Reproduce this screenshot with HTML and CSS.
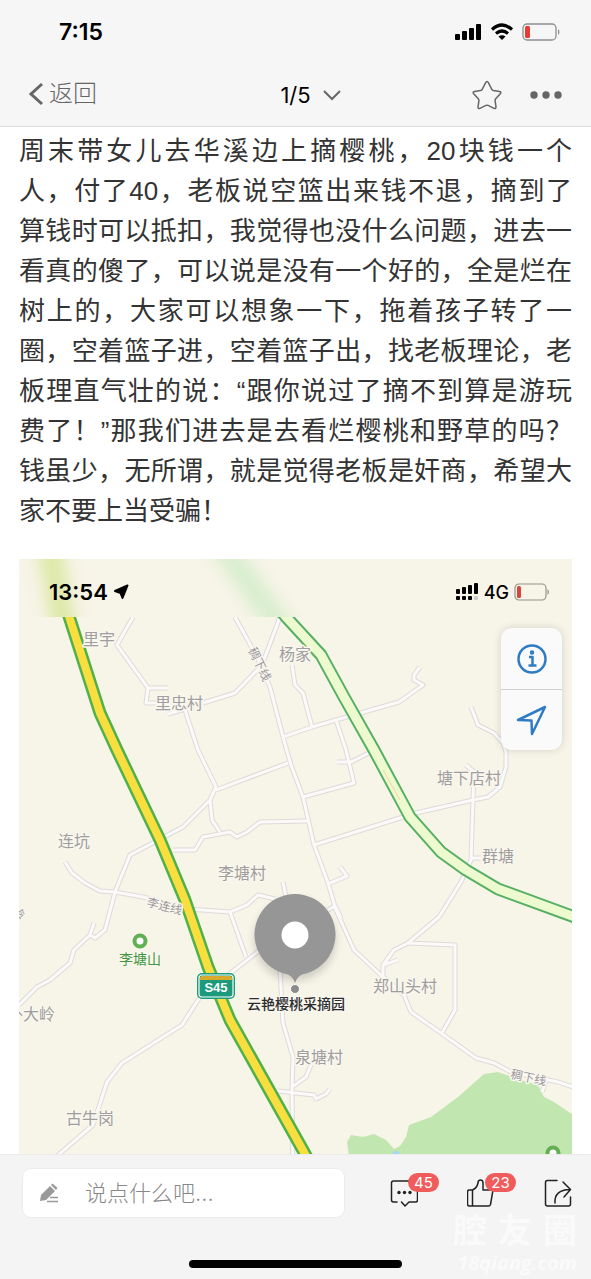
FILE: index.html
```html
<!DOCTYPE html>
<html lang="zh-CN">
<head>
    <meta charset="UTF-8">
    <meta name="viewport" content="width=device-width, initial-scale=1.0">
    <title>1/5</title>
    <link rel="stylesheet" href="styles.css">
</head>
<body>
    <header class="top">
        <div class="status">
            <span class="clock">7:15</span>
            <svg class="status-icons" width="108" height="20" viewBox="0 0 108 20" aria-hidden="true">
                <rect x="1" y="12" width="5" height="6" rx="1"/>
                <rect x="8" y="9" width="5" height="9" rx="1"/>
                <rect x="15" y="6" width="5" height="12" rx="1"/>
                <rect x="22" y="2" width="5" height="16" rx="1"/>
                <path d="M38 7.500q10-9 20 0M42 11.500q6-5 12 0" fill="none" stroke="#000" stroke-width="3.200"/>
                <path d="M44.500 14.500q3.500-2.500 7 0L48 18z"/>
                <rect x="69" y="2" width="33" height="16" rx="4" fill="none" stroke="#8f8f8f" stroke-width="1.300"/>
                <rect x="71" y="4" width="5" height="12" rx="1.500" fill="#ea3a35"/>
                <path d="M104 7q3 3 0 6z" fill="#8f8f8f"/>
            </svg>
        </div>
        <nav class="nav">
            <a class="back" href="#">
                <svg width="16" height="24" viewBox="0 0 16 24" aria-hidden="true"><path d="M14 2L3 12l11 10"/></svg>
                返回
            </a>
            <button class="pager" type="button">
                1/5
                <svg width="18" height="12" viewBox="0 0 18 12" aria-hidden="true"><path d="M1 2l8 8 8-8"/></svg>
            </button>
            <div class="nav-right">
                <button type="button" aria-label="收藏">
                    <svg width="30" height="30" viewBox="0 0 30 30" aria-hidden="true"><path d="M13.500 2.800q1.500-2.600 3 0l3.300 6.500q.5 1 1.600 1.100l6.100 1q2.300.5.800 2.400l-4.600 5q-.8.900-.6 2l.9 6q.1 2.300-2 1.500l-5.900-2.900q-1.100-.5-2.200 0L8 28.300q-2.100.8-2-1.500l.9-6q.2-1.100-.6-2l-4.600-5q-1.500-1.900.8-2.400l6.100-1q1.100-.1 1.600-1.100z"/></svg>
                </button>
                <button type="button" aria-label="更多">
                    <svg class="dots" width="32" height="10" viewBox="0 0 32 10" aria-hidden="true"><circle cx="4" cy="5" r="3.700"/><circle cx="16" cy="5" r="3.700"/><circle cx="28" cy="5" r="3.700"/></svg>
                </button>
            </div>
        </nav>
    </header>

    <main class="post">
        <p class="text">
            <span>周末带女儿去华溪边上摘樱桃，20块钱一个</span>
            <span>人，付了40，老板说空篮出来钱不退，摘到了</span>
            <span>算钱时可以抵扣，我觉得也没什么问题，进去一</span>
            <span>看真的傻了，可以说是没有一个好的，全是烂在</span>
            <span>树上的，大家可以想象一下，拖着孩子转了一</span>
            <span>圈，空着篮子进，空着篮子出，找老板理论，老</span>
            <span>板理直气壮的说：“跟你说过了摘不到算是游玩</span>
            <span>费了！”那我们进去是去看烂樱桃和野草的吗？</span>
            <span>钱虽少，无所谓，就是觉得老板是奸商，希望大</span>
            <span>家不要上当受骗！</span>
        </p>

        <div class="map">
            <svg class="map-canvas" viewBox="19 559 553 622" role="img" aria-label="地图">
                <defs>
                    <filter id="soft" x="-50%" y="-50%" width="200%" height="200%"><feGaussianBlur stdDeviation="8"/></filter>
                    <filter id="shadow" x="-30%" y="-30%" width="160%" height="160%"><feGaussianBlur stdDeviation="5"/></filter>
                    <clipPath id="band"><rect x="19" y="559" width="553" height="58"/></clipPath>
                    <clipPath id="below"><rect x="19" y="617" width="553" height="564"/></clipPath>
                    <g id="lanes">
                        <path d="M133 617L117 645L148 688H168M148 688L146 703H156"/>
                        <path d="M235 617L257 657L270 687L283 737L291 765L303 797L314 845L328 883L336 910L354 950L383 977L404 995L411 1012L441 1033L476 1058L494 1063L511 1072L558 1082L573 1087"/>
                        <path d="M280 617L262 665L235 693L203 703M168 714L185 709"/>
                        <path d="M292 665L295 685L303 693L312 727"/>
                        <path d="M283 737L312 727L336 720L399 702L423 685L414 680V675L420 667"/>
                        <path d="M336 720L346 750L354 783L303 797M337 762H351L369 753"/>
                        <path d="M471 707L478 725L494 733L503 743L506 752V767L500 787L488 797L473 800L416 813L314 845"/>
                        <path d="M466 765L474 772L473 800L471 860L461 882L439 917L408 943L394 950L383 965V977M471 858H481M383 965L398 960"/>
                        <path d="M408 943L455 945V1010L442 1033"/>
                        <path d="M340 867L347 876L328 884M328 910L335 906L341 918"/>
                        <path d="M307 821L260 822L247 832L237 837L230 832L203 837L195 850H173"/>
                        <path d="M185 710L198 750L216 787L210 800L183 827L130 855L115 892L105 930L95 938L90 935L74 950L70 963L50 980L37 987L19 1005M94 923L90 935"/>
                        <path d="M216 790L288 763M210 800L212 820L220 832"/>
                        <path d="M65 862L72 873L85 883L100 891L115 892L143 897L187 909L230 912L247 905L258 895L275 899M283 882L286 897"/>
                        <path d="M230 912L246 957M260 950L200 997L182 1025L122 1063L107 1082L93 1125L57 1156"/>
                        <path d="M280 970L283 1023L293 1057L292 1090L293 1180M278 1091L314 1095L316 1099L326 1094L330 1089M292 1087L306 1077L311 1065"/>
                        <path d="M546 1081L542 1092"/>
                    </g>
                </defs>

                <rect class="land" x="19" y="559" width="553" height="622"/>
                <path class="park" d="M349 1181V1156L347 1142L351 1135L363 1137L374 1134L386 1140L394 1149L400 1146L406 1137L409 1125L431 1117L458 1097L484 1074L498 1072L521 1080L538 1085L544 1097L554 1102L573 1115V1181z"/>
                <circle cx="396" cy="1155" r="4" fill="#a9d9ee"/>

                <g clip-path="url(#below)">
                    <use href="#lanes" class="lane-edge"/>
                    <use href="#lanes" class="lane"/>
                    <path class="road-edge express" d="M280 610L287 618L321 655L344 697L374 750L410 817L441 852L466 870L498 889L580 919"/>
                    <path class="road pale" d="M280 610L287 618L321 655L344 697L374 750L410 817L441 852L466 870L498 889L580 919"/>
                    <path d="M383 770L400 800" stroke="#f6dfae" stroke-width="1.500"/>
                    <path class="road-edge" d="M67 610L100 713L117 750L160 840L185 900L208 967L230 1020L300 1145L320 1181"/>
                    <path class="road" d="M67 610L100 713L117 750L160 840L185 900L208 967L230 1020L300 1145L320 1181"/>
                </g>
                <g clip-path="url(#band)">
                    <g filter="url(#soft)" fill="none" stroke-width="24">
                        <path d="M46 530L66 640" stroke="#dde8a6"/>
                        <path d="M218 540L290 640" stroke="#d8eecd"/>
                    </g>
                </g>

                <g class="place">
                    <text x="83" y="645">里宇</text>
                    <text x="155" y="709">里忠村</text>
                    <text x="279" y="660">杨家</text>
                    <text x="437" y="784">塘下店村</text>
                    <text x="58" y="847">连坑</text>
                    <text x="218" y="879">李塘村</text>
                    <text x="482" y="862">群塘</text>
                    <text x="373" y="992">郑山头村</text>
                    <text x="295" y="1063">泉塘村</text>
                    <text x="66" y="1124">古牛岗</text>
                    <text x="7" y="1020">外大岭</text>
                </g>
                <g class="street">
                    <text transform="translate(248 650) rotate(64)">稠下线</text>
                    <text transform="translate(146 906) rotate(14)">李连线</text>
                    <text transform="translate(510 1078) rotate(12)">稠下线</text>
                    <text transform="translate(12 916) rotate(18)">岭</text>
                </g>

                <circle class="peak" cx="140" cy="941" r="5.500"/>
                <circle class="peak" cx="553" cy="1153" r="5.500"/>
                <text class="peak-name" x="140" y="964">李塘山</text>

                <rect x="197" y="973" width="38" height="26" rx="5" fill="#1b9a7c"/>
                <rect x="199" y="975" width="34" height="22" rx="3" fill="#1b9a7c" stroke="#fff" stroke-width="1.200"/>
                <path d="M200 980v-2q0-2 2-2h28q2 0 2 2v2z" fill="#d9a92c"/>
                <text class="shield" x="216" y="992">S45</text>

                <circle cx="295" cy="940" r="40" fill="#000" opacity=".18" filter="url(#shadow)"/>
                <path d="M295 983q-3-9-11-9.500A40.500 40.500 0 1 1 306 973.500q-8 .5-11 9.500z" fill="#969696"/>
                <circle cx="295" cy="935" r="13.500" fill="#fff"/>
                <circle cx="295" cy="989" r="4.500" fill="#8b8b8b" stroke="#fff"/>
                <text class="pin-name" x="296" y="1009">云艳樱桃采摘园</text>
            </svg>

            <div class="map-status">
                <span class="clock">13:54</span>
                <svg width="16" height="16" viewBox="0 0 16 16" aria-hidden="true"><path d="M14.500 1.500L9.500 14 7.500 9 2 7z" stroke="#000" stroke-width="2" stroke-linejoin="round"/></svg>
                <svg class="push" width="24" height="20" viewBox="0 0 24 20" aria-hidden="true">
                    <rect x="1" y="7" width="4" height="5" rx="1"/><rect x="7" y="5" width="4" height="7" rx="1"/><rect x="13" y="3" width="4" height="9" rx="1"/><rect x="19" y="1" width="4" height="11" rx="1"/>
                    <rect x="1" y="14" width="4" height="4" rx="1"/><rect x="7" y="14" width="4" height="4" rx="1"/><rect x="13" y="14" width="4" height="4" rx="1"/><rect x="19" y="14" width="4" height="4" rx="1" fill="#ccc"/>
                </svg>
                <span class="carrier">4G</span>
                <svg width="36" height="18" viewBox="0 0 36 18" aria-hidden="true">
                    <rect x="1" y="1" width="31" height="16" rx="4" fill="none" stroke="#96948c" stroke-width="1.200"/>
                    <rect x="3" y="3" width="4" height="12" rx="1.500" fill="#d9453f"/>
                    <path d="M33.500 6q3 3 0 6z" fill="#96948c"/>
                </svg>
            </div>

            <div class="map-tools">
                <button type="button" aria-label="信息">
                    <svg width="32" height="32" viewBox="0 0 32 32" aria-hidden="true"><circle cx="16" cy="16" r="13.500"/><path d="M13 14h3.500v8.500M12.500 22.500h8"/><circle cx="16" cy="9.500" r="1"/></svg>
                </button>
                <button type="button" aria-label="定位">
                    <svg width="32" height="32" viewBox="0 0 32 32" aria-hidden="true"><path d="M29 3L16 30l-.5-13.500L2 16z"/></svg>
                </button>
            </div>
        </div>
    </main>

    <footer class="bottom">
        <div class="bar">
            <label class="comment-box">
                <svg width="20" height="20" viewBox="0 0 20 20" aria-hidden="true"><path d="M1 18l1-6L11 3l5 5-9 9zM12 2l1.500-1.500 5 4.500L17 7z"/><path d="M11 14.500h8M8 18.500h11" stroke="#999" stroke-width="1.500"/></svg>
                <input type="text" placeholder="说点什么吧..." aria-label="说点什么吧">
            </label>
            <div class="actions">
                <button type="button" aria-label="评论">
                    <svg width="28" height="28" viewBox="0 0 28 28" aria-hidden="true"><path d="M7 23H3.500q-2 0-2-2V4q0-2 2-2h22q2 0 2 2v17q0 2-2 2H19l-4 4-3.500-4"/><g fill="#222" stroke="none"><circle cx="9" cy="13.500" r="1.700"/><circle cx="14.500" cy="13.500" r="1.700"/><circle cx="20" cy="13.500" r="1.700"/></g></svg>
                    <span class="badge">45</span>
                </button>
                <button type="button" aria-label="点赞">
                    <svg width="28" height="28" viewBox="0 0 28 28" aria-hidden="true"><path d="M5.500 11H2.500q-2 0-2 2v12q0 2 2 2h19q1.500 0 2-1.500L26 11H16V4q0-3-2.500-3T11 4q-1 5-5.500 7v16"/></svg>
                    <span class="badge">23</span>
                </button>
                <button type="button" aria-label="分享">
                    <svg width="28" height="28" viewBox="0 0 28 28" aria-hidden="true"><path d="M13 1.500H3.500q-2 0-2 2v21.500q0 2 2 2h21q2 0 2-2V18M11 24q-1-13 15-13.500M19 3l7.500 7.500L20 18"/></svg>
                </button>
            </div>
        </div>
        <div class="watermark"><span class="mark-name">腔友圈</span><span class="mark-site">18qiang.com</span></div>
        <div class="home-line"></div>
    </footer>
</body>
</html>
```
FILE: styles.css
```css
* {
    box-sizing: border-box;
}

body {
    margin: 0;
    height: 100vh;
    display: flex;
    flex-direction: column;
    overflow: hidden;
    background-color: #fff;
    font-family: Inter, "Noto Sans CJK SC", sans-serif;
    color: #333;
}

button {
    display: flex;
    align-items: center;
    padding: 0;
    border: none;
    background: none;
    font: inherit;
    cursor: pointer;
}

svg {
    display: block;
    flex: none;
}

/* top bar */
.top {
    flex: none;
    background-color: #f6f6f6;
    border-bottom: 1px solid #dcdcdc;
}

.status {
    display: flex;
    justify-content: space-between;
    align-items: center;
    height: 64px;
    padding: 0 29px 0 59px;
}

.clock {
    font-size: 22px;
    font-weight: 600;
    color: #000;
}

.status .clock {
    font-size: 23px;
}

.nav {
    display: grid;
    grid-template-columns: 1fr auto 1fr;
    align-items: center;
    height: 62px;
    padding: 0 29px 0 28px;
}

.nav svg {
    fill: none;
    stroke: #666;
    stroke-width: 2;
}

.back {
    display: flex;
    align-items: center;
    gap: 5px;
    font-size: 24px;
    font-weight: 300;
    line-height: 32px;
    padding-bottom: 2px;
    color: #666;
    text-decoration: none;
}

.nav .back svg {
    stroke-width: 3;
}

.pager {
    gap: 12px;
    padding-left: 31px;
    font-size: 22px;
    color: #000;
}

.nav-right {
    display: flex;
    justify-content: flex-end;
    gap: 28px;
}

.nav-right svg {
    stroke-width: 1.5;
}

.nav .dots {
    fill: #666;
    stroke: none;
}

/* post */
.post {
    flex: 1;
    min-height: 0;
    overflow: hidden;
    padding: 4px 19px 0;
}

.text {
    margin: 0 0 28px;
    font-family: "Liberation Sans", "Noto Sans CJK SC", sans-serif;
    font-size: 26px;
    line-height: 40px;
}

.text span {
    display: block;
    white-space: nowrap;
    text-align: justify;
    text-align-last: justify;
}

.text span:last-child {
    text-align-last: left;
}

/* map */
.map {
    position: relative;
}

.map-canvas {
    width: 100%;
}

.land {
    fill: #f7f4e8;
}

.park {
    fill: #c2e6b0;
}

.lane-edge,
.lane,
.road-edge,
.road {
    fill: none;
    stroke-linejoin: round;
}

.lane-edge {
    stroke: #dedadb;
    stroke-width: 5;
}

.lane {
    stroke: #fbfaf8;
    stroke-width: 3;
}

.road-edge {
    stroke: #4fb149;
    stroke-width: 13;
}

.road {
    stroke: #f9de3f;
    stroke-width: 8;
}

.express {
    stroke: #55b063;
}

.pale {
    stroke: #edfad0;
    stroke-width: 9;
}

.place,
.street,
.peak-name,
.pin-name {
    paint-order: stroke;
    stroke: #f9f7ee;
    stroke-width: 3px;
    stroke-linejoin: round;
}

.place {
    font-size: 16px;
    fill: #a09e9e;
}

.street {
    font-size: 12px;
    fill: #99969c;
}

.peak {
    fill: #fff;
    stroke: #62b052;
    stroke-width: 4;
}

.peak-name {
    font-size: 14px;
    text-anchor: middle;
    fill: #439640;
}

.pin-name {
    font-size: 14px;
    font-weight: 500;
    text-anchor: middle;
    fill: #2c2c2e;
}

.shield {
    font-family: "Liberation Sans", sans-serif;
    font-size: 13px;
    font-weight: 700;
    text-anchor: middle;
    fill: #fff;
}

.map-status {
    position: absolute;
    top: 0;
    left: 0;
    right: 0;
    display: flex;
    align-items: center;
    gap: 5px;
    height: 66px;
    padding: 0 22px 0 30px;
    color: #000;
}

.push {
    margin-left: auto;
}

.carrier {
    font-size: 18px;
    font-weight: 500;
}

.map-tools {
    position: absolute;
    top: 69px;
    right: 10px;
    width: 61px;
    border-radius: 11px;
    background-color: #fafafa;
    box-shadow: 0 0 8px rgba(0, 0, 0, 0.15);
}

.map-tools button {
    justify-content: center;
    width: 100%;
    height: 61px;
}

.map-tools button + button {
    border-top: 1px solid #cfcfcf;
}

.map-tools svg {
    fill: none;
    stroke: #2f7cc4;
    stroke-width: 2.5;
    stroke-linejoin: round;
}

/* bottom bar */
.bottom {
    position: relative;
    flex: none;
    height: 125px;
    background-color: #f4f4f4;
    border-top: 1px solid #ebebeb;
}

.bar {
    display: flex;
    align-items: center;
    gap: 45px;
    padding: 13px 19px 0 22px;
}

.comment-box {
    display: flex;
    flex: 1;
    min-width: 0;
    align-items: center;
    gap: 26px;
    height: 50px;
    padding: 0 16px;
    border: 1px solid #ececec;
    border-radius: 9px;
    background-color: #fff;
}

.comment-box svg {
    fill: #999;
}

.comment-box input {
    flex: 1;
    min-width: 0;
    padding: 0;
    border: none;
    outline: none;
    background: none;
    font: 300 22px Inter, "Noto Sans CJK SC", sans-serif;
    color: #333;
}

.comment-box input::placeholder {
    color: #888;
}

.actions {
    display: flex;
    gap: 49px;
}

.actions button {
    position: relative;
}

.actions svg {
    fill: none;
    stroke: #222;
    stroke-width: 1.5;
    stroke-linecap: round;
    stroke-linejoin: round;
}

.badge {
    position: absolute;
    top: -6px;
    left: 18px;
    width: 31px;
    border-radius: 10px;
    background-color: #f05b5b;
    color: #fff;
    font-size: 15px;
    line-height: 19px;
    text-align: center;
}

.home-line {
    position: absolute;
    bottom: 11px;
    left: 32%;
    right: 32%;
    height: 8px;
    border-radius: 4px;
    background-color: #000;
}

.watermark {
    position: absolute;
    right: 14px;
    bottom: 5px;
    width: 124px;
    color: #fafafa;
    font-weight: 700;
}

.watermark span {
    display: block;
}

.mark-name {
    font-size: 34px;
    line-height: 42px;
    text-align-last: justify;
}

.mark-site {
    font-family: "Open Sans", sans-serif;
    font-size: 20px;
    font-style: italic;
    line-height: 22px;
    text-align: right;
}
```
